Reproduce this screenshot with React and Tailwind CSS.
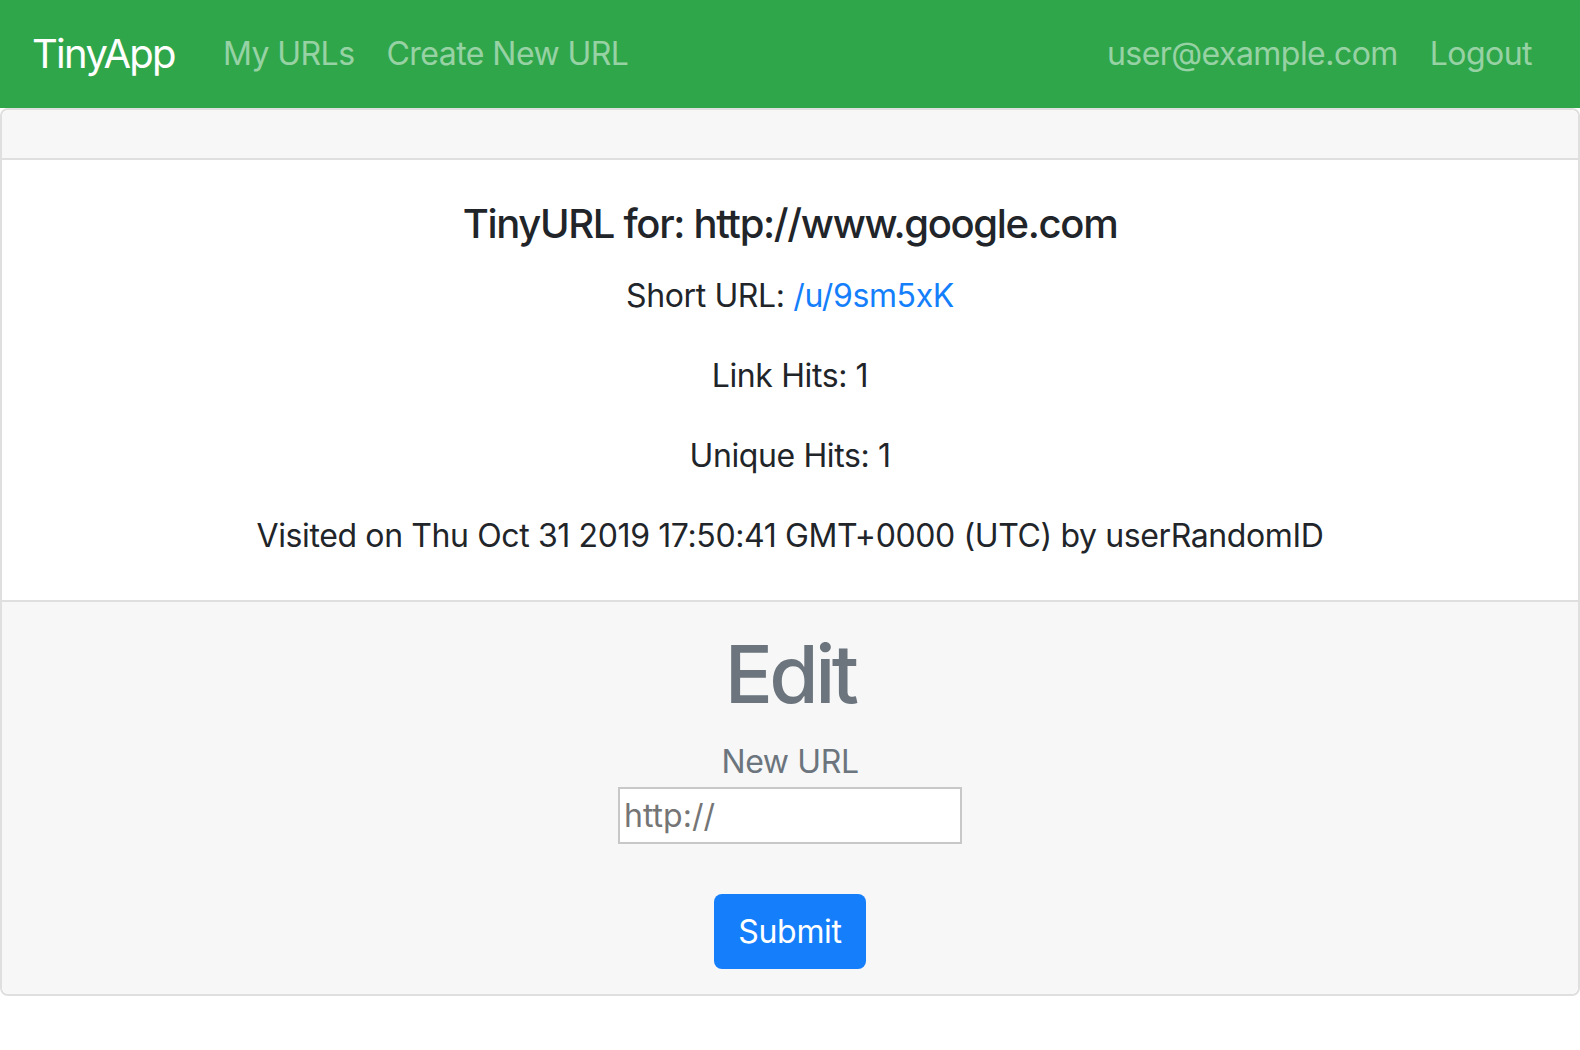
export default function App() {
  return (
    <div className="min-h-screen bg-white font-['Inter','Noto_Sans',sans-serif] text-[#212529]">
      <nav className="flex h-[108px] items-center bg-[#30a64b] px-8">
        <a href="#" className="mr-8 text-[40px] leading-[60px] tracking-[-0.043em] text-white">
          TinyApp
        </a>
        <div className="flex tracking-[-0.034em]">
          <a href="#" className="px-4 text-[32px] leading-[48px] text-white/50">
            My URLs
          </a>
          <a href="#" className="px-4 text-[32px] leading-[48px] text-white/50">
            Create New URL
          </a>
        </div>
        <div className="ml-auto flex tracking-[-0.034em]">
          <span className="px-4 text-[32px] leading-[48px] text-white/50">user@example.com</span>
          <a href="#" className="px-4 text-[32px] leading-[48px] text-white/50">
            Logout
          </a>
        </div>
      </nav>

      <div className="rounded-lg border-2 border-[#dfdfdf] text-center">
        <div className="h-[50px] rounded-t-lg border-b-2 border-[#dfdfdf] bg-[#f7f7f7]" />
        <div className="bg-white px-10 py-10 tracking-[-0.024em]">
          <h5 className="mb-6 text-[40px] font-medium leading-[48px] tracking-[-0.033em]">
            TinyURL for: http://www.google.com
          </h5>
          <p className="mb-8 text-[32px] leading-[48px]">
            Short URL: <a href="#" className="text-[#157ffb]">/u/9sm5xK</a>
          </p>
          <p className="mb-8 text-[32px] leading-[48px]">Link Hits: 1</p>
          <p className="mb-8 text-[32px] leading-[48px]">Unique Hits: 1</p>
          <p className="text-[32px] leading-[48px]">
            Visited on Thu Oct 31 2019 17:50:41 GMT+0000 (UTC) by userRandomID
          </p>
        </div>
        <div className="rounded-b-lg border-t-2 border-[#dfdfdf] bg-[#f7f7f7] px-10 pt-6 pb-[25px]">
          <h1 className="mb-4 text-[80px] font-medium leading-[96px] tracking-[-0.045em] text-[#6c757d]">
            Edit
          </h1>
          <form className="flex flex-col items-center" onSubmit={(e) => e.preventDefault()}>
            <label className="mb-px block text-[32px] leading-[48px] tracking-[-0.012em] text-[#6c757d]">
              New URL
            </label>
            <input
              type="text"
              placeholder="http://"
              className="h-[57px] w-[344px] border-2 border-[#c8c8c8] bg-white px-1 text-[32px] text-[#222] outline-none placeholder:text-[#757575]"
            />
            <button
              type="submit"
              className="mt-[50px] h-[75px] rounded-lg bg-[#157ffb] px-6 text-[32px] tracking-[-0.01em] text-white"
            >
              Submit
            </button>
          </form>
        </div>
      </div>
    </div>
  )
}
